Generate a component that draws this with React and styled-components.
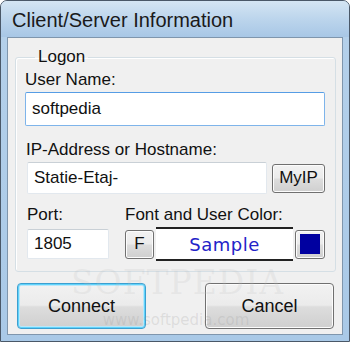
import styled, { createGlobalStyle } from 'styled-components';

const GlobalStyle = createGlobalStyle`
  html, body {
    margin: 0;
    padding: 0;
    background: #ffffff;
  }

  body {
    font-family: "Liberation Sans", Arial, sans-serif;
  }
`;

const Window = styled.div`
  position: relative;
  width: 350px;
  height: 342px;
  box-sizing: border-box;
  border: 1px solid #4a5868;
  border-radius: 7px 7px 0 0;
  background: linear-gradient(180deg, #c9deef 0%, #b4d0ea 10%, #a9c9e7 100%);
  display: flex;
  flex-direction: column;
  overflow: hidden;
`;

const TitleBar = styled.div`
  height: 36px;
  flex: none;
  display: flex;
  align-items: center;
  padding: 2px 0 0 11px;
  box-sizing: border-box;
  font-size: 20px;
  color: #1a1a1a;
  background: linear-gradient(180deg, #d4e5f3 0%, #bcd5ec 50%, #a8c7e6 100%);
`;

const Client = styled.div`
  flex: 1;
  margin: 0 6px 6px 6px;
  border: 1px solid #7f96ad;
  background: #f0f0f0;
  padding: 10px 7px 0 7px;
  display: flex;
  flex-direction: column;
`;

const Group = styled.fieldset`
  margin: 0;
  padding: 0 10px 0 9px;
  border: 1px solid #d5dfe5;
  border-radius: 3px;
  box-shadow: inset 1px 1px 0 #ffffff;
  height: 224px;
  box-sizing: border-box;
  display: flex;
  flex-direction: column;
`;

const Legend = styled.legend`
  padding: 0 3px;
  margin-left: 10px;
  font-size: 17px;
  color: #111;
  line-height: 18px;
`;

const Label = styled.div`
  font-size: 17px;
  color: #111;
  line-height: 20px;
  margin-top: ${(p) => p.$top || 0}px;
  margin-left: ${(p) => p.$left || 0}px;
  margin-bottom: 2px;
  white-space: nowrap;
`;

const Input = styled.div`
  box-sizing: border-box;
  flex: none;
  height: ${(p) => p.$h}px;
  width: ${(p) => (p.$w ? `${p.$w}px` : 'auto')};
  margin-left: ${(p) => p.$left || 0}px;
  border: 1px solid ${(p) => (p.$focus ? '#7eb4ea' : '#e2e8ee')};
  border-top-color: ${(p) => (p.$focus ? '#569de5' : '#c9d0d6')};
  border-radius: 2px;
  background: #ffffff;
  display: flex;
  align-items: center;
  padding-left: 6px;
  font-size: 17px;
  color: #111;
`;

const Row = styled.div`
  display: flex;
  align-items: center;
  height: ${(p) => p.$h || 34}px;
  gap: ${(p) => p.$gap || 5}px;
`;

const SmallButton = styled.div`
  box-sizing: border-box;
  flex: none;
  height: 29px;
  width: ${(p) => p.$w}px;
  border: 1px solid #707070;
  border-radius: 3px;
  background: linear-gradient(180deg, #f2f2f2 0%, #ebebeb 48%, #dddddd 52%, #cfcfcf 100%);
  box-shadow: inset 0 0 0 1px #fcfcfc;
  display: flex;
  align-items: center;
  justify-content: center;
  font-size: 17px;
  color: #111;
`;

const Sample = styled.div`
  box-sizing: border-box;
  flex: none;
  width: 137px;
  height: 34px;
  border-top: 2px solid #222;
  border-bottom: 2px solid #222;
  background: #ffffff;
  display: flex;
  align-items: center;
  justify-content: center;
  font-family: "DejaVu Sans", Verdana, sans-serif;
  font-size: 18px;
  color: #2323c8;
  letter-spacing: 0.5px;
`;

const Swatch = styled.div`
  width: 20px;
  height: 20px;
  background: #0000a0;
`;

const Columns = styled.div`
  display: flex;
  gap: 16px;
`;

const Column = styled.div`
  display: flex;
  flex-direction: column;
`;

const Buttons = styled.div`
  display: flex;
  justify-content: space-between;
  margin-top: 11px;
  padding: 0 1px 0 2px;
`;

const DialogButton = styled.div`
  box-sizing: border-box;
  width: 129px;
  height: 46px;
  border: 1px solid ${(p) => (p.$focus ? '#3c9fd0' : '#707070')};
  border-radius: 4px;
  background: linear-gradient(180deg, #f2f2f2 0%, #ebebeb 48%, #dddddd 52%, #cfcfcf 100%);
  box-shadow: ${(p) => (p.$focus
    ? 'inset 0 0 0 1px #5fd3fb, inset 0 0 0 2px #b9e7fa'
    : 'inset 0 0 0 1px #fcfcfc')};
  display: flex;
  align-items: center;
  justify-content: center;
  font-size: 18px;
  color: #111;
`;

const Watermark = styled.div`
  position: absolute;
  left: 70px;
  top: 264px;
  width: 210px;
  text-align: center;
  font-family: "DejaVu Serif", serif;
  font-size: 33px;
  letter-spacing: 1px;
  color: rgba(190, 190, 190, 0.2);
  pointer-events: none;
  line-height: 36px;

  span {
    display: block;
    font-family: "DejaVu Sans", sans-serif;
    font-size: 15px;
    letter-spacing: 0;
    line-height: 18px;
    margin-top: 10px;
    color: rgba(150, 150, 150, 0.22);
  }
`;

export default function App() {
  return (
    <>
      <GlobalStyle />
      <Window>
        <TitleBar>Client/Server Information</TitleBar>
        <Client>
          <Group>
            <Legend>Logon</Legend>
            <Label $top={4}>User Name:</Label>
            <Input $focus $h={34}>softpedia</Input>
            <Label $top={14} $left={1}>IP-Address or Hostname:</Label>
            <Row $h={32}>
              <Input $w={240} $h={32} $left={2}>Statie-Etaj-</Input>
              <SmallButton $w={53}>MyIP</SmallButton>
            </Row>
            <Columns>
              <Column>
                <Label $top={11} $left={2}>Port:</Label>
                <Row>
                  <Input $w={82} $h={30} $left={2}>1805</Input>
                </Row>
              </Column>
              <Column>
                <Label $top={11}>Font and User Color:</Label>
                <Row $gap={2}>
                  <SmallButton $w={29}>F</SmallButton>
                  <Sample>Sample</Sample>
                  <SmallButton $w={30}>
                    <Swatch />
                  </SmallButton>
                </Row>
              </Column>
            </Columns>
          </Group>
          <Buttons>
            <DialogButton $focus>Connect</DialogButton>
            <DialogButton>Cancel</DialogButton>
          </Buttons>
        </Client>
        <Watermark>
          SOFTPEDIA
          <span>www.softpedia.com</span>
        </Watermark>
      </Window>
    </>
  );
}
